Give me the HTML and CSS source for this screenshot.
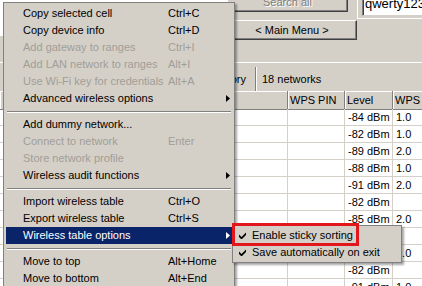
FILE: index.html
```html
<!DOCTYPE html>
<html lang="en">
<head>
    <meta charset="UTF-8">
    <meta name="viewport" content="width=device-width, initial-scale=1.0">
    <title>Wireless table menu</title>
    <link rel="stylesheet" href="styles.css">
</head>
<body>
    <div class="app">
        <!-- Top panel: buttons and key field -->
        <div class="toolbar">
            <div class="toolbar-fill"></div>
            <div class="btn-stack">
                <button class="btn btn-search" disabled>Search all</button>
                <button class="btn btn-main">&lt; Main Menu &gt;</button>
            </div>
            <div class="key-group">
                <div class="key-field">qwerty12345</div>
            </div>
        </div>

        <!-- Status line -->
        <div class="status">
            <div class="status-cell status-first">Inventory</div>
            <div class="status-cell">18 networks</div>
        </div>

        <!-- Network table -->
        <div class="grid">
            <div class="grid-head">
                <span></span>
                <span>WPS PIN</span>
                <span>Level</span>
                <span>WPS</span>
            </div>
            <div class="grid-row"><span></span><span></span><span>-84 dBm</span><span>1.0</span></div>
            <div class="grid-row"><span></span><span></span><span>-82 dBm</span><span>1.0</span></div>
            <div class="grid-row"><span></span><span></span><span>-89 dBm</span><span>2.0</span></div>
            <div class="grid-row"><span></span><span></span><span>-88 dBm</span><span>1.0</span></div>
            <div class="grid-row"><span></span><span></span><span>-91 dBm</span><span>2.0</span></div>
            <div class="grid-row"><span></span><span></span><span>-82 dBm</span><span></span></div>
            <div class="grid-row"><span></span><span></span><span>-85 dBm</span><span>2.0</span></div>
            <div class="grid-row"><span></span><span></span><span>-79 dBm</span><span></span></div>
            <div class="grid-row"><span></span><span></span><span>-86 dBm</span><span>1.0</span></div>
            <div class="grid-row"><span></span><span></span><span>-82 dBm</span><span></span></div>
            <div class="grid-row"><span></span><span></span><span>-91 dBm</span><span>1.0</span></div>
        </div>
    </div>

    <!-- Context menu -->
    <div class="menu ctx">
        <div class="menu-item"><span>Copy selected cell</span><span>Ctrl+C</span></div>
        <div class="menu-item"><span>Copy device info</span><span>Ctrl+D</span></div>
        <div class="menu-item disabled"><span>Add gateway to ranges</span><span>Ctrl+I</span></div>
        <div class="menu-item disabled"><span>Add LAN network to ranges</span><span>Alt+I</span></div>
        <div class="menu-item disabled"><span>Use Wi-Fi key for credentials</span><span>Alt+A</span></div>
        <div class="menu-item"><span>Advanced wireless options</span><span></span>
            <svg class="arrow" width="4" height="7"><polygon points="0,0 4,3.5 0,7"/></svg></div>
        <div class="menu-sep"></div>
        <div class="menu-item"><span>Add dummy network...</span><span></span></div>
        <div class="menu-item disabled"><span>Connect to network</span><span>Enter</span></div>
        <div class="menu-item disabled"><span>Store network profile</span><span></span></div>
        <div class="menu-item"><span>Wireless audit functions</span><span></span>
            <svg class="arrow" width="4" height="7"><polygon points="0,0 4,3.5 0,7"/></svg></div>
        <div class="menu-sep"></div>
        <div class="menu-item"><span>Import wireless table</span><span>Ctrl+O</span></div>
        <div class="menu-item"><span>Export wireless table</span><span>Ctrl+S</span></div>
        <div class="menu-item active"><span>Wireless table options</span><span></span>
            <svg class="arrow" width="4" height="7"><polygon points="0,0 4,3.5 0,7"/></svg></div>
        <div class="menu-sep"></div>
        <div class="menu-item"><span>Move to top</span><span>Alt+Home</span></div>
        <div class="menu-item"><span>Move to bottom</span><span>Alt+End</span></div>
    </div>

    <!-- Submenu: Wireless table options -->
    <div class="menu sub">
        <div class="menu-item">
            <svg class="check" width="7" height="7"><path d="M0 2.5L2.5 5L7 0.5V3L2.5 7.5L0 5Z"/></svg>
            <span>Enable sticky sorting</span>
        </div>
        <div class="menu-item">
            <svg class="check" width="7" height="7"><path d="M0 2.5L2.5 5L7 0.5V3L2.5 7.5L0 5Z"/></svg>
            <span>Save automatically on exit</span>
        </div>
    </div>

    <div class="callout"></div>
</body>
</html>
```

FILE: styles.css
```css
/* General Styling */
body {
    margin: 0;
    background-color: #D4D0C8; /* classic 3D face */
    font-family: "Liberation Sans", Arial, sans-serif;
    font-size: 11px;
    color: #000;
    overflow: hidden;
}

.app {
    width: 422px;
    overflow: hidden;
}

/* Top panel */
.toolbar {
    display: flex;
    align-items: flex-start;
    height: 62px;
}

.toolbar-fill {
    flex: none;
    width: 227px;
    height: 36px;
    background-color: #fff;
}

.btn-stack {
    flex: none;
    width: 130px;
    margin-top: -8px;
    display: flex;
    flex-direction: column;
    gap: 8px;
}

.btn {
    font: inherit;
    height: 20px;
    padding: 0;
    background-color: #D4D0C8;
    color: #000;
    border: 1px solid;
    border-color: #fff #404040 #404040 #fff;
    box-shadow: inset -1px -1px #808080;
}

.btn-search {
    width: 121px;
}

.btn-search:disabled {
    color: #808080;
    text-shadow: 1px 1px #fff;
}

.btn-main {
    width: 130px;
}

.key-group {
    flex: none;
    width: 80px;
    height: 19px;
    margin-top: -1px;
    padding-left: 4px;
    border-left: 1px solid #fff;
    border-bottom: 1px solid #fff;
}

.key-field {
    height: 18px;
    margin-top: -1px;
    box-sizing: border-box;
    padding-left: 2px;
    font-size: 13px;
    line-height: 9px;
    background-color: #fff;
    border: 1px solid;
    border-color: #808080 #fff #D4D0C8 #808080;
    box-shadow: inset 1px 1px #404040;
    color: #000;
    overflow: hidden;
}

/* Status line */
.status {
    display: flex;
    height: 29px;
    box-sizing: border-box;
    border-top: 1px solid #fff;
    padding: 4px 0 0;
}

.status-cell {
    line-height: 24px;
    padding-left: 6px;
    white-space: nowrap;
}

.status-first {
    width: 256px;
    box-sizing: border-box;
    padding: 0 9px 0 0;
    text-align: right;
    border-right: 1px solid #808080;
    box-shadow: 1px 0 #fff;
}

/* Table */
.grid-head, .grid-row {
    display: grid;
    grid-template-columns: 288px 57px 48px 80px;
}

.grid-head {
    height: 18px;
}

.grid-head span {
    border-right: 1px solid #808080;
    border-bottom: 1px solid #808080;
    box-shadow: inset 1px 1px #fff;
    line-height: 18px;
    padding-left: 2px;
}

.grid-row {
    height: 17px;
    background-color: #fff;
}

.grid-row span {
    border-right: 1px solid #D4D0C8;
    border-bottom: 1px solid #D4D0C8;
    line-height: 16px;
    padding-left: 3px;
    white-space: nowrap;
}

/* Menus */
.menu {
    position: absolute;
    box-sizing: border-box;
    background-color: #D4D0C8;
    border: 1px solid #808080;
    box-shadow: 2px 2px 2px rgba(0, 0, 0, 0.35);
}

.ctx {
    left: 3px;
    top: 2px;
    width: 232px;
    padding: 2px;
}

.menu-item {
    display: grid;
    grid-template-columns: 145px 1fr 8px;
    align-items: center;
    height: 17px;
    line-height: 17px;
    padding-left: 17px;
    white-space: nowrap;
}

.menu-item.disabled {
    color: #a19e97;
}

.menu-item.active {
    background-color: #0A246A;
    color: #fff;
}

.arrow {
    display: block;
    margin-left: 2px;
    fill: currentColor;
}

.menu-sep {
    margin: 4px 1px 3px;
    border-top: 1px solid #808080;
    border-bottom: 1px solid #fff;
}

.sub {
    left: 232px;
    top: 225px;
    width: 170px;
    padding: 1px;
}

.sub .menu-item {
    grid-template-columns: 18px 1fr;
    padding-left: 0;
}

.check {
    display: block;
    margin-left: 5px;
    fill: #000;
}

/* Red annotation box */
.callout {
    position: absolute;
    left: 232px;
    top: 223px;
    width: 127px;
    height: 23px;
    box-sizing: border-box;
    border: 3px solid #e3161b;
}
```
